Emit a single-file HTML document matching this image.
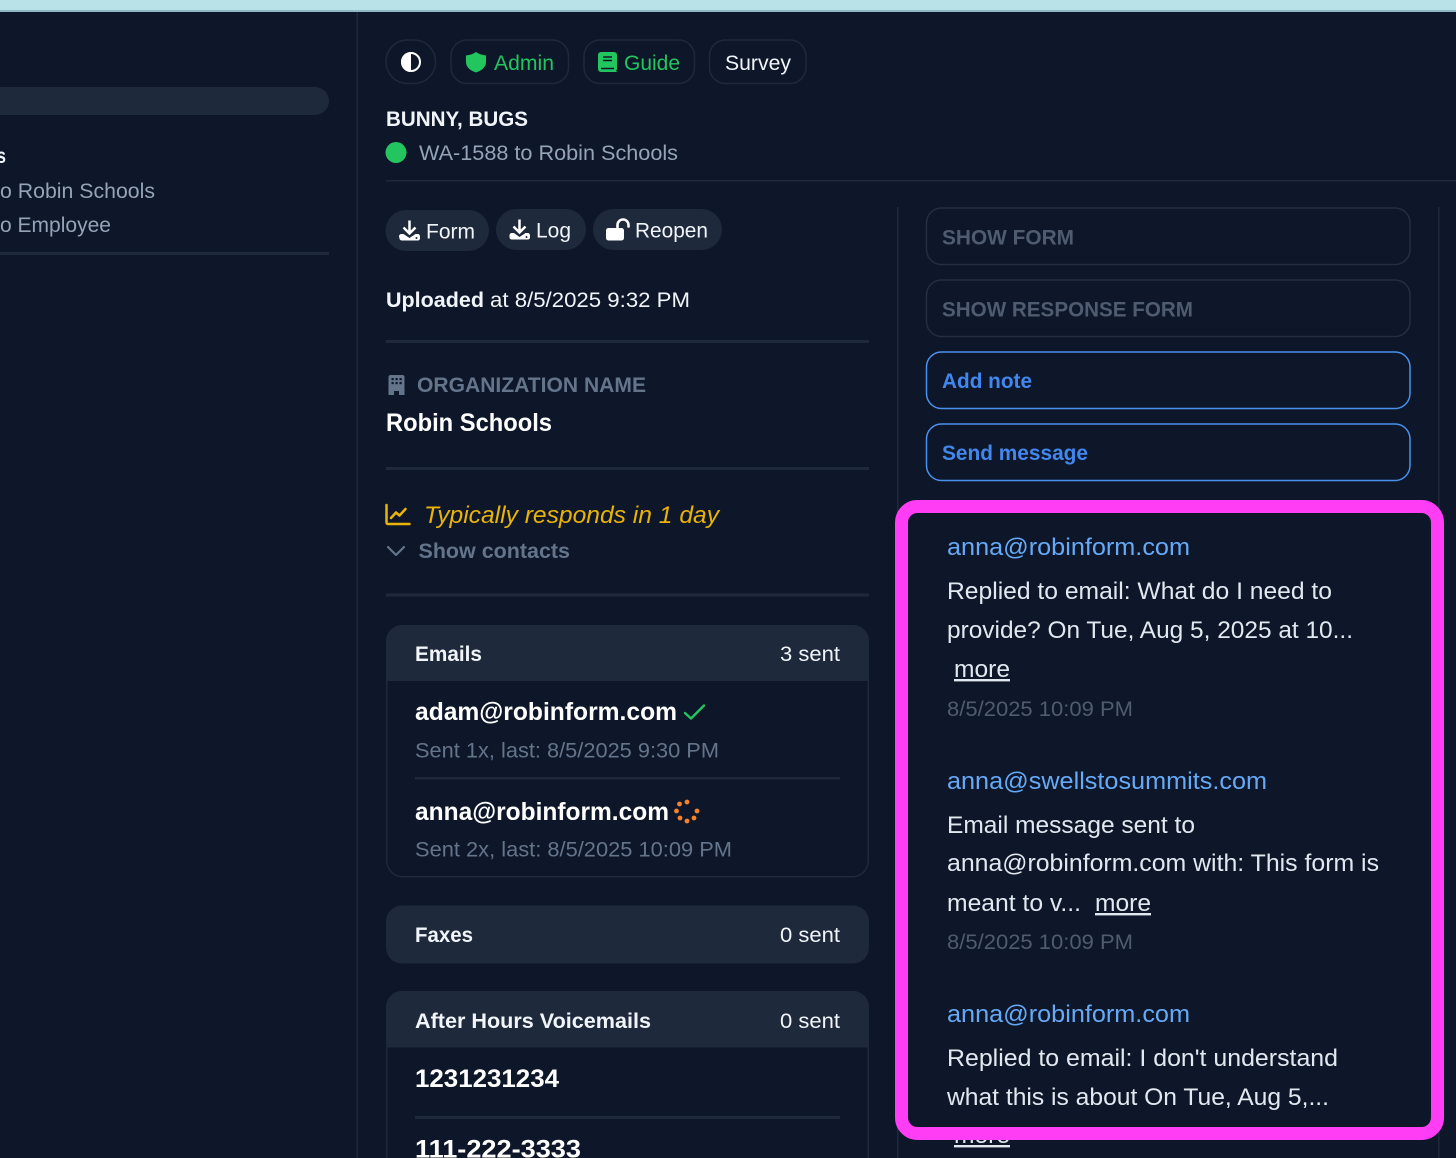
<!DOCTYPE html>
<html lang="en">
<head>
<meta charset="utf-8">
<title>Robin Schools</title>
<style>
html,body{margin:0;padding:0;background:#0e1729;width:1456px;height:1158px;overflow:hidden}
svg{display:block}
text{font-family:"Liberation Sans",sans-serif;font-size:21.5px;fill:#f1f5f9}
.b{font-weight:700}
.m{fill:#e2e8f0;font-size:24px}
.e{fill:#65a9f7;font-size:24px}
.d{fill:#4f5b70;font-size:21.5px}
.g{fill:#64748b}
.s{fill:#94a3b8}
</style>
</head>
<body>
<svg width="1456" height="1158" viewBox="0 0 1456 1158" xmlns="http://www.w3.org/2000/svg">
<rect width="1456" height="1158" fill="#0e1729"/>
<rect width="1456" height="10" fill="#b9e1e8"/>
<rect y="10" width="1456" height="2" fill="#8fb9c4"/>
<rect x="356.500" y="12" width="1.500" height="1146" fill="#1e293b"/>

<!-- sidebar -->
<rect x="-30" y="87" width="359" height="28" rx="14" fill="#1e293b"/>
<text x="-8" y="163" class="b" textLength="14" lengthAdjust="spacingAndGlyphs">ls</text>
<text x="0" y="198" class="s" textLength="155" lengthAdjust="spacingAndGlyphs">o Robin Schools</text>
<text x="0" y="232" class="s" textLength="111" lengthAdjust="spacingAndGlyphs">o Employee</text>
<rect x="0" y="252" width="329" height="3" fill="#1e293b"/>

<!-- top buttons -->
<g fill="none" stroke="#1e293b" stroke-width="1.5">
<rect x="386" y="40" width="49.500" height="43.500" rx="21.500"/>
<rect x="451" y="40" width="117.500" height="43.500" rx="16"/>
<rect x="584" y="40" width="110.500" height="43.500" rx="16"/>
<rect x="709.500" y="40" width="96.500" height="43.500" rx="16"/>
</g>
<circle cx="411" cy="62" r="9" fill="#0e1729" stroke="#fff" stroke-width="2"/>
<path d="M411 52a10 10 0 0 0 0 20z" fill="#fff"/>
<path d="M476 52c3 2 6 3 10 3.500v6.500c0 5-4 8.500-10 10.500-6-2-10-5.500-10-10.500v-6.500c4-.5 7-1.500 10-3.500z" fill="#22c55e"/>
<text x="494" y="70" style="fill:#22c55e" textLength="60" lengthAdjust="spacingAndGlyphs">Admin</text>
<path d="M598 55a3 3 0 0 1 3-3h13a3 3 0 0 1 3 3v14.500l-1 1 1 1.500h-16a3 3 0 0 1-3-3z" fill="#22c55e"/>
<path d="M603 57h9M603 60.500h9M601 68.500h13" stroke="#0e1729" stroke-width="1.500"/>
<text x="624" y="70" style="fill:#22c55e" textLength="56" lengthAdjust="spacingAndGlyphs">Guide</text>
<text x="725" y="70" textLength="66" lengthAdjust="spacingAndGlyphs">Survey</text>

<text x="386" y="126" class="b" textLength="142" lengthAdjust="spacingAndGlyphs">BUNNY, BUGS</text>
<circle cx="396" cy="152.500" r="10.500" fill="#22c55e"/>
<text x="419" y="160" class="s" textLength="259" lengthAdjust="spacingAndGlyphs">WA-1588 to Robin Schools</text>
<rect x="386" y="180" width="1070" height="1.500" fill="#1e293b"/>

<!-- pills -->
<rect x="385.500" y="210" width="103.500" height="41" rx="20.500" fill="#1e293b"/>
<rect x="496" y="209" width="90" height="41" rx="20.500" fill="#1e293b"/>
<rect x="593" y="209" width="129" height="41" rx="20.500" fill="#1e293b"/>
<g fill="none" stroke="#fff" stroke-width="2.500">
<path d="M409.500 220.500v13M403.500 227.500l6 6 6-6"/>
<path d="M519.500 219.500v13M513.500 226.500l6 6 6-6"/>
</g>
<g fill="#fff">
<path d="M399 236.500c0-1.500 1-2.500 2.500-2.500h2l6 4 6-4h2c1.500 0 2.500 1 2.500 2.500v2c0 1-1 2-2 2h-16c-1.500 0-2.500-1-2.500-2z"/>
<path d="M509.500 235.500c0-1.500 1-2.500 2.500-2.500h2l5.500 4 6-4h2c1.500 0 2.500 1 2.500 2.500v2c0 1-1 2-2 2h-16c-1.500 0-2.500-1-2.500-2z"/>
<rect x="606" y="228" width="18" height="12.500" rx="2.500"/>
</g>
<circle cx="416.500" cy="238" r="1" fill="#1e293b"/>
<circle cx="526.500" cy="237" r="1" fill="#1e293b"/>
<path d="M617.500 229v-4a5.500 5.500 0 0 1 11 0v1.500" fill="none" stroke="#fff" stroke-width="2.600" stroke-linecap="round"/>
<text x="426" y="238.500" textLength="49" lengthAdjust="spacingAndGlyphs">Form</text>
<text x="536" y="237.500" textLength="35" lengthAdjust="spacingAndGlyphs">Log</text>
<text x="635" y="237.500" textLength="73" lengthAdjust="spacingAndGlyphs">Reopen</text>

<text x="386" y="307" class="b" textLength="98" lengthAdjust="spacingAndGlyphs">Uploaded</text>
<text x="490" y="307" textLength="200" lengthAdjust="spacingAndGlyphs">at 8/5/2025 9:32 PM</text>
<rect x="386" y="340" width="483" height="3" fill="#1e293b"/>

<!-- org -->
<path d="M391 375h11a2 2 0 0 1 2.500 2v18h-5.500v-4h-5v4h-5.500v-18a2 2 0 0 1 2.500-2z" fill="#64748b"/>
<g fill="#0e1729">
<rect x="391.500" y="378" width="2.200" height="2.200"/><rect x="395.500" y="378" width="2.200" height="2.200"/><rect x="399.500" y="378" width="2.200" height="2.200"/>
<rect x="391.500" y="382" width="2.200" height="2.200"/><rect x="395.500" y="382" width="2.200" height="2.200"/><rect x="399.500" y="382" width="2.200" height="2.200"/>
</g>
<text x="417" y="392" class="b g" textLength="229" lengthAdjust="spacingAndGlyphs">ORGANIZATION NAME</text>
<text x="386" y="431" class="b" style="font-size:25px;fill:#fff" textLength="166" lengthAdjust="spacingAndGlyphs">Robin Schools</text>
<rect x="386" y="467" width="483" height="3" fill="#1e293b"/>

<path d="M386.500 505v17.500a1.500 1.500 0 0 0 1.500 1.500h21.500" fill="none" stroke="#eab308" stroke-width="2.500" stroke-linecap="round"/>
<path d="M391 518l5-5.500 3.500 3 6-6.500" fill="none" stroke="#eab308" stroke-width="2.500" stroke-linecap="round" stroke-linejoin="round"/>
<text x="424" y="523" style="font-size:24px;font-style:italic;fill:#eab308" textLength="295" lengthAdjust="spacingAndGlyphs">Typically responds in 1 day</text>
<path d="M388 547l8 8 8-8" fill="none" stroke="#64748b" stroke-width="2.200" stroke-linecap="round" stroke-linejoin="round"/>
<text x="418.500" y="558" class="b g" textLength="151.500" lengthAdjust="spacingAndGlyphs">Show contacts</text>
<rect x="386" y="593.500" width="483" height="3" fill="#1e293b"/>

<!-- Emails card -->
<rect x="386.750" y="625.750" width="481.500" height="251" rx="16" fill="none" stroke="#1e293b" stroke-width="1.500"/>
<path d="M386 681v-40a16 16 0 0 1 16-16h451a16 16 0 0 1 16 16v40z" fill="#1e293b"/>
<text x="415" y="661" class="b" textLength="67" lengthAdjust="spacingAndGlyphs">Emails</text>
<text x="780" y="661" textLength="60" lengthAdjust="spacingAndGlyphs">3 sent</text>
<text x="415" y="720" class="b" style="font-size:25px;fill:#fff" textLength="262" lengthAdjust="spacingAndGlyphs">adam@robinform.com</text>
<path d="M685 713l6 5.500 13-13" fill="none" stroke="#22c55e" stroke-width="2.400" stroke-linecap="round" stroke-linejoin="round"/>
<text x="415" y="757.500" class="g" textLength="304" lengthAdjust="spacingAndGlyphs">Sent 1x, last: 8/5/2025 9:30 PM</text>
<rect x="415" y="777" width="425" height="2.500" fill="#1e293b"/>
<text x="415" y="820" class="b" style="font-size:25px;fill:#fff" textLength="254" lengthAdjust="spacingAndGlyphs">anna@robinform.com</text>
<g fill="#f5822a">
<circle cx="687" cy="802" r="2.400"/><circle cx="679.500" cy="804" r="2.400"/><circle cx="676.500" cy="811" r="2.400"/><circle cx="680" cy="818" r="2.400"/><circle cx="687" cy="821" r="2.400"/><circle cx="694" cy="818" r="2.400"/><circle cx="697" cy="811" r="2.400"/>
</g>
<text x="415" y="856.500" class="g" textLength="317" lengthAdjust="spacingAndGlyphs">Sent 2x, last: 8/5/2025 10:09 PM</text>

<!-- Faxes -->
<rect x="386" y="905.500" width="483" height="58" rx="16" fill="#1e293b"/>
<text x="415" y="942" class="b" textLength="58" lengthAdjust="spacingAndGlyphs">Faxes</text>
<text x="780" y="942" textLength="60" lengthAdjust="spacingAndGlyphs">0 sent</text>

<!-- Voicemail -->
<rect x="386.750" y="991.750" width="481.500" height="200" rx="16" fill="none" stroke="#1e293b" stroke-width="1.500"/>
<path d="M386 1047.500v-40.500a16 16 0 0 1 16-16h451a16 16 0 0 1 16 16v40.500z" fill="#1e293b"/>
<text x="415" y="1028" class="b" textLength="236" lengthAdjust="spacingAndGlyphs">After Hours Voicemails</text>
<text x="780" y="1028" textLength="60" lengthAdjust="spacingAndGlyphs">0 sent</text>
<text x="415" y="1087" class="b" style="font-size:25px;fill:#fff" textLength="144" lengthAdjust="spacingAndGlyphs">1231231234</text>
<rect x="415" y="1116" width="425" height="3" fill="#1e293b"/>
<text x="415" y="1157.500" class="b" style="font-size:25px;fill:#fff" textLength="166" lengthAdjust="spacingAndGlyphs">111-222-3333</text>

<!-- right column -->
<rect x="897" y="207" width="1.500" height="951" fill="#1e293b"/>
<rect x="1438" y="207" width="1.500" height="951" fill="#1e293b"/>
<g fill="none" stroke-width="1.500">
<rect x="926.500" y="208" width="483.500" height="56.500" rx="15" stroke="#222e41"/>
<rect x="926.500" y="280" width="483.500" height="56.500" rx="15" stroke="#222e41"/>
<rect x="926.500" y="352" width="483.500" height="56.500" rx="15" stroke="#4a90ee"/>
<rect x="926.500" y="424" width="483.500" height="56.500" rx="15" stroke="#4a90ee"/>
</g>
<text x="942" y="244.500" class="b d" textLength="132" lengthAdjust="spacingAndGlyphs">SHOW FORM</text>
<text x="942" y="316.500" class="b d" textLength="251" lengthAdjust="spacingAndGlyphs">SHOW RESPONSE FORM</text>
<text x="942" y="388" class="b" style="fill:#4287ee" textLength="90" lengthAdjust="spacingAndGlyphs">Add note</text>
<text x="942" y="460" class="b" style="fill:#4287ee" textLength="146" lengthAdjust="spacingAndGlyphs">Send message</text>

<!-- activity -->
<text x="947" y="555" class="e" textLength="243" lengthAdjust="spacingAndGlyphs">anna@robinform.com</text>
<text x="947" y="599" class="m" textLength="385" lengthAdjust="spacingAndGlyphs">Replied to email: What do I need to</text>
<text x="947" y="638" class="m" textLength="406" lengthAdjust="spacingAndGlyphs">provide? On Tue, Aug 5, 2025 at 10...</text>
<text x="954" y="677" class="m" text-decoration="underline" textLength="56" lengthAdjust="spacingAndGlyphs">more</text>
<text x="947" y="716" class="d" textLength="186" lengthAdjust="spacingAndGlyphs">8/5/2025 10:09 PM</text>
<text x="947" y="789" class="e" textLength="320" lengthAdjust="spacingAndGlyphs">anna@swellstosummits.com</text>
<text x="947" y="833" class="m" textLength="248" lengthAdjust="spacingAndGlyphs">Email message sent to</text>
<text x="947" y="871" class="m" textLength="432" lengthAdjust="spacingAndGlyphs">anna@robinform.com with: This form is</text>
<text x="947" y="911" class="m" textLength="134" lengthAdjust="spacingAndGlyphs">meant to v...</text>
<text x="1095" y="911" class="m" text-decoration="underline" textLength="56" lengthAdjust="spacingAndGlyphs">more</text>
<text x="947" y="949" class="d" textLength="186" lengthAdjust="spacingAndGlyphs">8/5/2025 10:09 PM</text>
<text x="947" y="1022" class="e" textLength="243" lengthAdjust="spacingAndGlyphs">anna@robinform.com</text>
<text x="947" y="1066" class="m" textLength="391" lengthAdjust="spacingAndGlyphs">Replied to email: I don't understand</text>
<text x="947" y="1105" class="m" textLength="382" lengthAdjust="spacingAndGlyphs">what this is about On Tue, Aug 5,...</text>
<text x="954" y="1143" class="m" text-decoration="underline" textLength="56" lengthAdjust="spacingAndGlyphs">more</text>
<rect x="901.500" y="506.500" width="536" height="627" rx="16" fill="none" stroke="#ff3df5" stroke-width="13"/>
</svg>
</body>
</html>
